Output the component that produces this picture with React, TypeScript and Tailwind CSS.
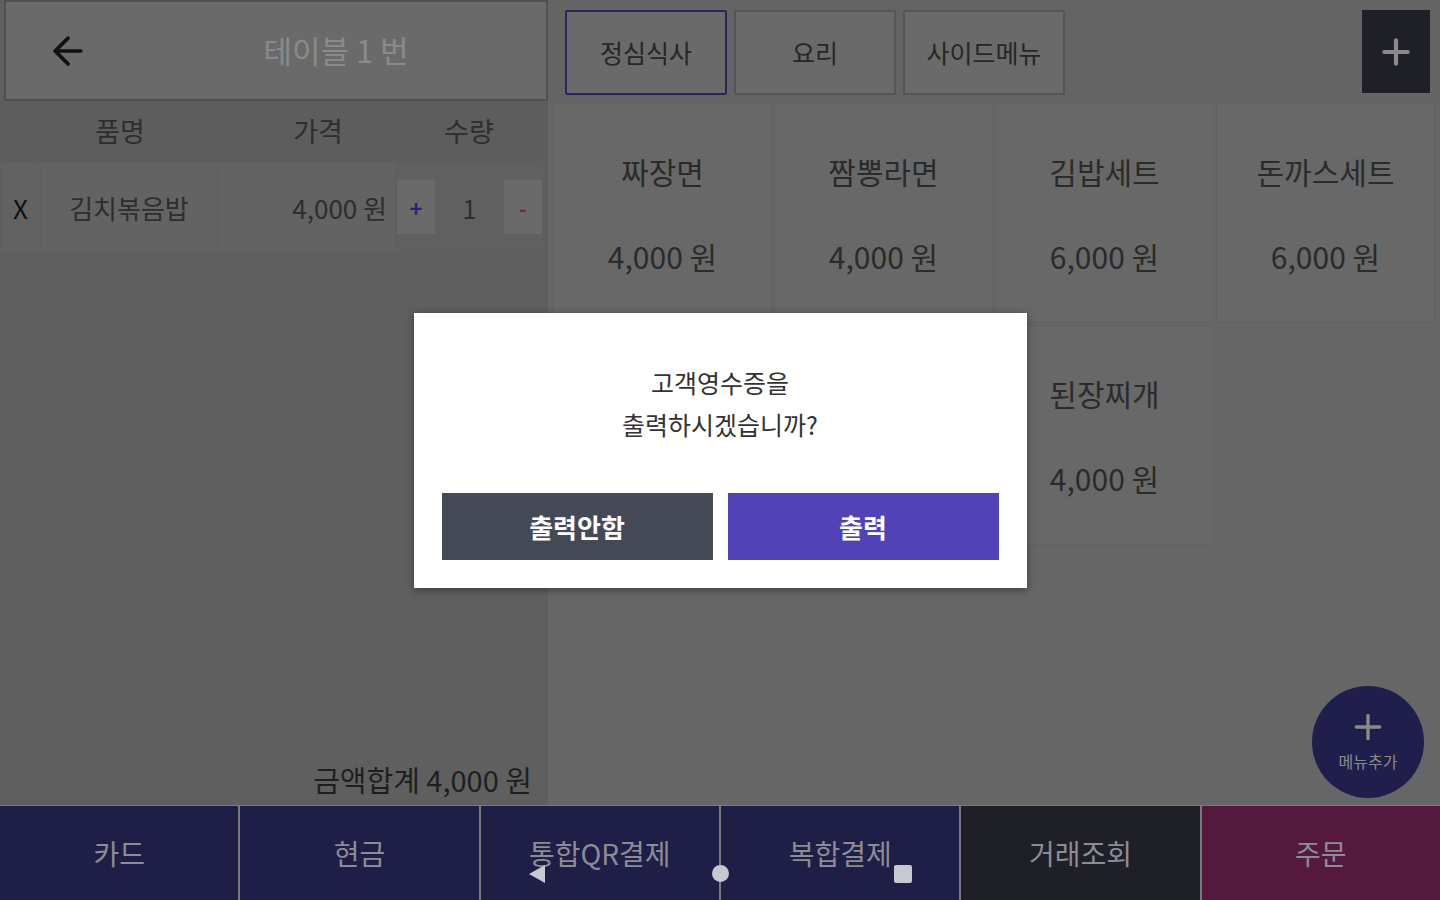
import { ArrowLeft, Plus } from "lucide-react";

const font = { fontFamily: '"Noto Sans CJK KR", "Noto Sans", sans-serif' };

const tabs = ["정심식사", "요리", "사이드메뉴"];

// row 2, cols 1-2 sit under the dialog
const menus = [
  { name: "짜장면", price: "4,000 원" },
  { name: "짬뽕라면", price: "4,000 원" },
  { name: "김밥세트", price: "6,000 원" },
  { name: "돈까스세트", price: "6,000 원" },
  { name: "", price: "" },
  { name: "", price: "" },
  { name: "된장찌개", price: "4,000 원" },
];

const payButtons = [
  { label: "카드", bg: "bg-[#1f1e46]" },
  { label: "현금", bg: "bg-[#1f1e46]" },
  { label: "통합QR결제", bg: "bg-[#1f1e46]" },
  { label: "복합결제", bg: "bg-[#1f1e46]" },
  { label: "거래조회", bg: "bg-[#1f2027]" },
  { label: "주문", bg: "bg-[#55193e]" },
];

export default function App() {
  return (
    <div className="relative w-[1440px] h-[900px] overflow-hidden flex flex-col bg-[#666666]" style={font}>
      <div className="flex flex-1 min-h-0">
        {/* Order list */}
        <div className="w-[548px] flex flex-col bg-[#5f5f5f]">
          <div className="ml-[4px] h-[101px] border-2 border-[#505050] bg-[#6a6a6a] flex items-center">
            <ArrowLeft className="ml-[40px] w-[44px] h-[44px] text-[#111111]" strokeWidth={2} />
            <div className="flex-1 text-center pl-[36px] text-[31px] text-[#8a8a8a]">테이블 1 번</div>
          </div>
          <div className="h-[60px] flex items-center text-[27px] text-[#2e2e2e] bg-[#5d5d5d]">
            <div className="w-[240px] text-center">품명</div>
            <div className="w-[156px] text-center">가격</div>
            <div className="w-[146px] text-center">수량</div>
          </div>
          <div className="flex h-[88px] ml-[2px] mr-[6px] mt-[2px] gap-[2px] text-[26px] text-[#262626]">
            <div className="w-[37px] bg-[#626262] flex items-center justify-center text-[#111111]">X</div>
            <div className="w-[176px] bg-[#636363] flex items-center justify-center text-[#2e2e2e]">김치볶음밥</div>
            <div className="w-[176px] bg-[#636363] flex items-center justify-end pr-[8px] text-[#2e2e2e]">4,000 원</div>
            <div className="flex-1 bg-[#606060] flex items-center justify-between">
              <div className="w-[38px] h-[54px] bg-[#6a6a6a] flex items-center justify-center text-[#26217a] text-[22px] font-bold">+</div>
              <div className="text-[#2e2e2e]">1</div>
              <div className="w-[38px] h-[54px] bg-[#6a6a6a] flex items-center justify-center text-[#8a1f4a] text-[22px] font-bold">-</div>
            </div>
          </div>
          <div className="flex-1" />
          <div className="text-right pr-[16px] pb-[4px] text-[29px] text-[#1f1f1f]">금액합계 4,000 원</div>
        </div>

        {/* Menu area */}
        <div className="relative flex-1 flex flex-col">
          <div className="h-[103px] flex items-start pt-[10px] pl-[17px] pr-[10px] gap-[7px] bg-[#646464]">
            {tabs.map((t, i) => (
              <div
                key={t}
                className={
                  "w-[162px] h-[85px] rounded-[2px] flex items-center justify-center text-[25px] text-[#262626] bg-[#6a6a6a] border-2 " +
                  (i === 0 ? "border-[#28265a]" : "border-[#555555]")
                }
              >
                {t}
              </div>
            ))}
            <div className="flex-1" />
            <div className="w-[68px] h-[83px] bg-[#1f2027] flex items-center justify-center">
              <Plus className="w-[40px] h-[40px] text-[#8a8a8a]" strokeWidth={2.5} />
            </div>
          </div>
          <div className="grid grid-cols-4 gap-[2px] px-[5px]">
            {menus.map((m, i) => (
              <div key={i} className="h-[220px] bg-[#686868] border border-[#626262] flex flex-col items-center text-[30px] text-[#2b2b2b]">
                {m.name && <div className="mt-[45px]">{m.name}</div>}
                {m.price && <div className="mt-[40px]">{m.price}</div>}
              </div>
            ))}
          </div>

          <div className="absolute right-[16px] bottom-[7px] w-[112px] h-[112px] rounded-full bg-[#201f4b] flex flex-col items-center justify-center">
            <Plus className="w-[40px] h-[40px] text-[#8a8a8a] -mt-[4px]" strokeWidth={2} />
            <div className="text-[16px] text-[#8a8a8a] mt-[2px]">메뉴추가</div>
          </div>
        </div>
      </div>

      {/* Payment bar */}
      <div className="relative h-[95px] grid grid-cols-6 gap-[2px] bg-[#7a7a7a] pt-[1px]">
        {payButtons.map((b) => (
          <div key={b.label} className={b.bg + " flex items-center justify-center text-[28px] text-[#8c8c95]"}>
            {b.label}
          </div>
        ))}
        {/* Android nav keys */}
        <svg className="absolute left-[527px] top-[59px]" width="20" height="20" viewBox="0 0 20 20">
          <polygon points="18,1 18,19 2,10" fill="#c8c8d0" />
        </svg>
        <div className="absolute left-[712px] top-[60px] w-[17px] h-[17px] rounded-full bg-[#c8c8d0]" />
        <div className="absolute left-[894px] top-[60px] w-[18px] h-[18px] rounded-[2px] bg-[#c8c8d0]" />
      </div>

      {/* Dialog */}
      <div className="absolute inset-0 flex items-center justify-center">
        <div className="w-[613px] h-[275px] bg-white shadow-[0_2px_8px_rgba(0,0,0,0.4)] flex flex-col items-center px-[28px]">
          <div className="mt-[52px] flex flex-col items-center gap-[8px] text-[25px] leading-[34px] text-[#333333]">
            <div>고객영수증을</div>
            <div>출력하시겠습니까?</div>
          </div>
          <div className="mt-[52px] w-full flex gap-[15px]">
            <div className="flex-1 h-[67px] bg-[#454956] flex items-center justify-center text-[26px] font-semibold text-white">출력안함</div>
            <div className="flex-1 h-[67px] bg-[#5142b8] flex items-center justify-center text-[26px] font-semibold text-white">출력</div>
          </div>
        </div>
      </div>
    </div>
  );
}
